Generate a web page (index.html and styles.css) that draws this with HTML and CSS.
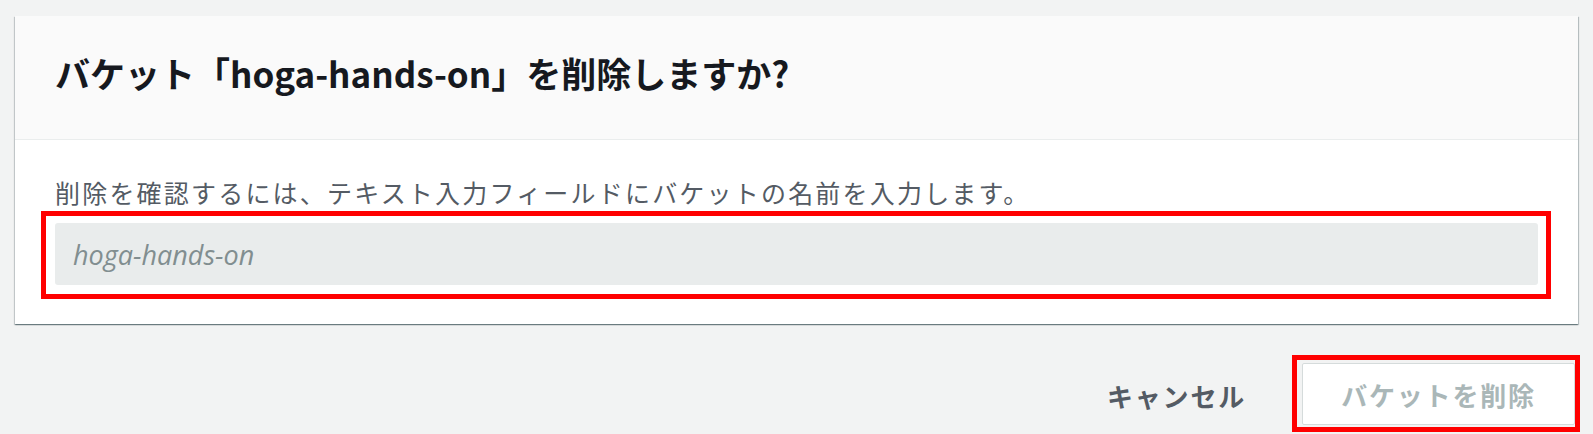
FILE: index.html
```html
<!DOCTYPE html>
<html lang="ja">
<head>
<meta charset="utf-8">
<title>バケットを削除</title>
<link rel="stylesheet" href="styles.css">
</head>
<body>
<div class="page">
  <section class="card">
    <header class="card-header">
      <h2 class="title">バケット「hoga-hands-on」を削除しますか?</h2>
    </header>
    <div class="card-body">
      <p class="label">削除を確認するには、テキスト入力フィールドにバケットの名前を入力します。</p>
      <div class="mark mark-input">
        <input class="field" type="text" placeholder="hoga-hands-on">
      </div>
    </div>
  </section>
  <div class="actions">
    <button class="btn-cancel" type="button">キャンセル</button>
    <div class="mark mark-btn">
      <button class="btn-delete" type="button" disabled>バケットを削除</button>
    </div>
  </div>
</div>
</body>
</html>
```

FILE: styles.css
```css
html, body {
  margin: 0;
  padding: 0;
  background: #f2f3f3;
  height: 100%;
  overflow: hidden;
}

body {
  font-family: "Noto Sans CJK JP", "Noto Sans", sans-serif;
}

.page {
  padding: 16px 15px 0 15px;
}

.card {
  background: #ffffff;
  box-shadow: 0 1px 1px 0 rgba(0, 28, 36, 0.35), 1px 1px 1px 0 rgba(0, 28, 36, 0.2), -1px 1px 1px 0 rgba(0, 28, 36, 0.15);
}

.card-header {
  background: #fafafa;
  border-bottom: 1px solid #eaeded;
  padding: 37px 40px 46px 40px;
}

.title {
  margin: 0;
  font-size: 35px;
  line-height: 40px;
  font-weight: 700;
  color: #16191f;
  letter-spacing: 0;
}

.card-body {
  padding: 37px 40px 25px 40px;
}

.label {
  margin: 0 0 4px 0;
  font-size: 25px;
  line-height: 30px;
  letter-spacing: 2.2px;
  color: #545b64;
  white-space: nowrap;
}

.mark {
  border: 5px solid #ff0000;
}

.mark-input {
  margin: 0 -13px 0 -14px;
  padding: 7px 8px 9px 9px;
}

.field {
  display: block;
  box-sizing: border-box;
  width: 100%;
  height: 62px;
  margin: 0;
  border: none;
  border-radius: 3px;
  background: #e9ecec;
  padding: 0 18px;
  font-family: "Open Sans", "Noto Sans", sans-serif;
  font-size: 27px;
  color: #545b64;
  outline: none;
}

.field::placeholder {
  color: #818e90;
  font-style: italic;
  opacity: 1;
}

.actions {
  display: flex;
  justify-content: flex-end;
  align-items: center;
  margin-top: 31px;
  margin-right: -2px;
}

.btn-cancel {
  font-family: "Noto Sans CJK JP", "Noto Sans", sans-serif;
  font-size: 26px;
  font-weight: 700;
  letter-spacing: 1.8px;
  color: #545b64;
  background: transparent;
  border: none;
  padding: 0 24px;
  height: 62px;
  margin-right: 22px;
  margin-top: 3px;
}

.mark-btn {
  padding: 3px 0 2px 5px;
}

.btn-delete {
  display: block;
  box-sizing: border-box;
  width: 273px;
  height: 62px;
  background: #ffffff;
  border: 1px solid #d5dbdb;
  border-radius: 2px;
  font-family: "Noto Sans CJK JP", "Noto Sans", sans-serif;
  font-size: 26px;
  font-weight: 700;
  letter-spacing: 1.8px;
  color: #aab7b8;
  padding: 0;
}
```
